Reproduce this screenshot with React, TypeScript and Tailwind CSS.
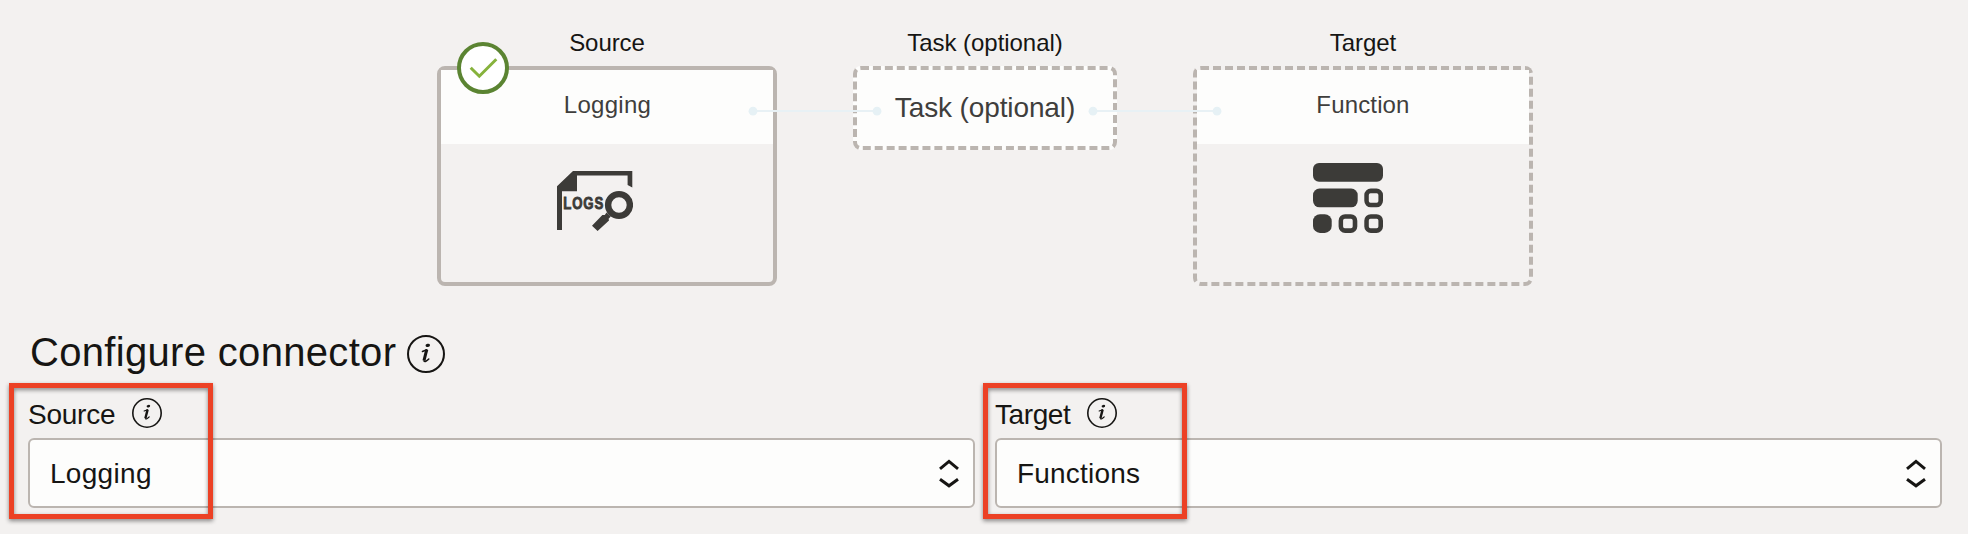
import type { ReactNode } from "react";

function InfoIcon({ className }: { className: string }) {
  return (
    <svg viewBox="0 0 30 30" className={className} fill="none" aria-label="Info">
      <circle cx="15" cy="15" r="14.2" stroke="#161513" strokeWidth="1.6" />
      <path
        d="M12.2 13 15.6 11.7M13.4 20.6Q14.4 21.7 17.2 18.9"
        stroke="#161513"
        strokeWidth="1.2"
        strokeLinecap="round"
      />
      <path d="M15.6 11.6 13.4 20.3" stroke="#161513" strokeWidth="2.4" />
      <ellipse cx="16.4" cy="8.2" rx="1.8" ry="1.3" fill="#161513" transform="rotate(-12 16.4 8.2)" />
    </svg>
  );
}

function LogsIcon() {
  return (
    <svg viewBox="0 0 76 61" className="h-[61px] w-[76px]" fill="#3c3b38">
      <path d="M16 0H75.3V16.6L70.6 14V4.4H20V20.3H5V59H0V15.2Z" />
      <text
        transform="translate(6.2 38) scale(0.76 1)"
        fontSize="17.4"
        fontWeight="700"
        letterSpacing="1.2"
        fontFamily="Liberation Sans, sans-serif"
        stroke="#3c3b38"
        strokeWidth="0.9"
      >
        LOGS
      </text>
      <circle cx="62" cy="34" r="10.9" fill="none" stroke="#3c3b38" strokeWidth="6.4" />
      <path d="M49.5 41.5 53.8 45.5 51.6 47.8 52 49.4 40.6 60 35 54.8 45.4 44 47.8 44Z" />
    </svg>
  );
}

function FunctionIcon() {
  return (
    <svg viewBox="0 0 70 70" className="h-[70px] w-[70px]" fill="#3c3b38">
      <rect x="0" y="0" width="70" height="18.7" rx="6" />
      <rect x="0" y="25.6" width="44.7" height="18.7" rx="6.5" />
      <rect x="0" y="51.2" width="18.7" height="18.7" rx="7" />
      <path
        fillRule="evenodd"
        d="M57.8 25.6h5.7a6.5 6.5 0 0 1 6.5 6.5v5.7a6.5 6.5 0 0 1-6.5 6.5h-5.7a6.5 6.5 0 0 1-6.5-6.5v-5.7a6.5 6.5 0 0 1 6.5-6.5ZM57.5 30.2a1.7 1.7 0 0 0-1.7 1.7V38a1.7 1.7 0 0 0 1.7 1.7h6.2a1.7 1.7 0 0 0 1.7-1.7V31.9a1.7 1.7 0 0 0-1.7-1.7Z"
      />
      <path
        fillRule="evenodd"
        d="M57.8 51.2h5.7a6.5 6.5 0 0 1 6.5 6.5v5.7a6.5 6.5 0 0 1-6.5 6.5h-5.7a6.5 6.5 0 0 1-6.5-6.5v-5.7a6.5 6.5 0 0 1 6.5-6.5ZM57.5 55.8a1.7 1.7 0 0 0-1.7 1.7v6.1a1.7 1.7 0 0 0 1.7 1.7h6.2a1.7 1.7 0 0 0 1.7-1.7V57.5a1.7 1.7 0 0 0-1.7-1.7Z"
      />
      <path
        fillRule="evenodd"
        d="M32.1 51.2h5.7a6.5 6.5 0 0 1 6.5 6.5v5.7a6.5 6.5 0 0 1-6.5 6.5h-5.7a6.5 6.5 0 0 1-6.5-6.5v-5.7a6.5 6.5 0 0 1 6.5-6.5ZM31.8 55.8a1.7 1.7 0 0 0-1.7 1.7v6.1a1.7 1.7 0 0 0 1.7 1.7h6.2a1.7 1.7 0 0 0 1.7-1.7V57.5a1.7 1.7 0 0 0-1.7-1.7Z"
      />
    </svg>
  );
}

function CheckBadge() {
  return (
    <svg viewBox="0 0 52 52" className="absolute -top-[28px] left-[16px] h-[52px] w-[52px]" fill="none">
      <circle cx="26" cy="26" r="24" fill="#fff" stroke="#5b8432" strokeWidth="4" />
      <path d="M13.7 25.7 22.3 34.2 39.3 17.3" stroke="#86b23c" strokeWidth="3" />
    </svg>
  );
}

function Connector() {
  return (
    <svg viewBox="0 0 134 10" className="absolute top-[36px] -right-[109px] z-10 h-[10px] w-[134px]">
      <path d="M5 5H129" stroke="#e8f1f5" strokeWidth="2" />
      <circle cx="5" cy="5.2" r="4.4" fill="#e6f1f5" />
      <circle cx="129" cy="5.2" r="4.4" fill="#e6f1f5" />
    </svg>
  );
}

function Stage({ title, children }: { title: string; children: ReactNode }) {
  return (
    <div className="flex flex-col items-center gap-[9px]">
      <div className="h-7 text-[24px] leading-7 tracking-[-0.05px] whitespace-nowrap">{title}</div>
      {children}
    </div>
  );
}

function SelectField({
  label,
  labelClass,
  value,
  valueClass,
  boxClass,
}: {
  label: string;
  labelClass: string;
  value: string;
  valueClass: string;
  boxClass: string;
}) {
  return (
    <div className="relative w-[947px]">
      <div className="mb-2 flex h-8 text-[28px] leading-[34px]">
        <span className={labelClass}>{label}</span>
        <InfoIcon className="h-[30px] w-[30px]" />
      </div>
      <div className="flex h-[70px] items-center justify-between rounded-[6px] border-2 border-[#bbb5b0] bg-[#fdfdfc] pr-[14px] pl-5">
        <span className={`pt-0.5 text-[28px] leading-8 ${valueClass}`}>{value}</span>
        <svg viewBox="0 0 20 30" className="h-[30px] w-[20px]" fill="none" stroke="#161513" strokeWidth="3">
          <path d="M1 10.8 10 3.4 19 10.8" />
          <path d="M1 21.2 10 27.8 19 21.2" />
        </svg>
      </div>
      <div
        className={`absolute -top-[15px] h-[136px] w-[204px] border-5 border-[#ec4125] drop-shadow-[0_2px_2px_rgba(0,0,0,0.45)] ${boxClass}`}
      />
    </div>
  );
}

export default function App() {
  return (
    <div className="h-[534px] w-[1968px] overflow-hidden bg-[#f3f1f0] pt-[29px] font-['Liberation_Sans',Arial,sans-serif] text-[#161513]">
      <div className="flex items-start gap-[76px] pl-[437px]">
        <Stage title="Source">
          <div className="relative h-[220px] w-[340px] rounded-[8px] border-4 border-[#bbb5b0]">
            <div className="h-[74px] bg-[#fdfdfc] pt-[21px] pl-px text-center text-[24px] leading-7 tracking-[0.3px] text-[#3f3e3c]">
              Logging
            </div>
            <div className="pt-[27px] pl-[116px]">
              <LogsIcon />
            </div>
            <CheckBadge />
            <Connector />
          </div>
        </Stage>
        <Stage title="Task (optional)">
          <div className="relative h-[84px] w-[264px] rounded-[8px] border-4 border-dashed border-[#bbb5b0] bg-[#fdfdfc] pt-[22px] text-center text-[28px] leading-8 tracking-[-0.12px] whitespace-nowrap text-[#3f3e3c]">
            Task (optional)
            <Connector />
          </div>
        </Stage>
        <Stage title="Target">
          <div className="h-[220px] w-[340px] rounded-[8px] border-4 border-dashed border-[#bbb5b0]">
            <div className="h-[74px] bg-[#fdfdfc] pt-[21px] text-center text-[24px] leading-7 tracking-[0.15px] text-[#3f3e3c]">
              Function
            </div>
            <div className="pt-[19px] pl-[116px]">
              <FunctionIcon />
            </div>
          </div>
        </Stage>
      </div>
      <div className="mt-[44px] flex h-11 items-center pl-[30px]">
        <h1 className="w-[377px] text-[40px] leading-[44px] tracking-[0.32px] whitespace-nowrap">Configure connector</h1>
        <InfoIcon className="mt-[3px] h-[38px] w-[38px]" />
      </div>
      <div className="mt-6 flex gap-5 pl-7">
        <SelectField
          label="Source"
          labelClass="w-[104px] tracking-[-0.25px]"
          value="Logging"
          valueClass="tracking-[0.3px]"
          boxClass="-left-[19px]"
        />
        <SelectField
          label="Target"
          labelClass="w-[92px] tracking-[-0.4px]"
          value="Functions"
          valueClass="tracking-[0.2px]"
          boxClass="-left-[12px]"
        />
      </div>
    </div>
  );
}
